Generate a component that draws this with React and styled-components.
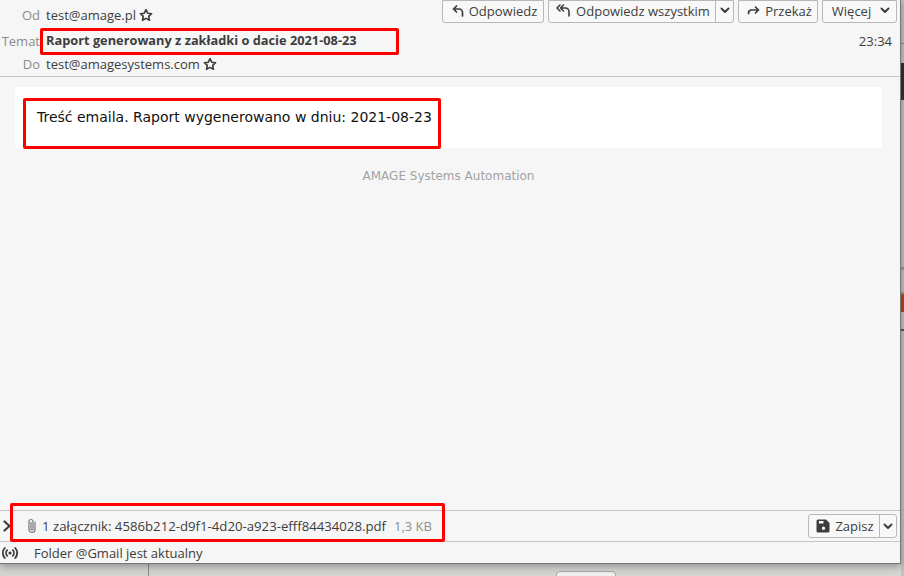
import React from "react";
import styled, { createGlobalStyle } from "styled-components";

const GlobalStyle = createGlobalStyle`
  html, body {
    margin: 0;
    padding: 0;
    height: 576px;
    overflow: hidden;
    background: #c4c4c2;
  }
`;

const Desktop = styled.div`
  position: relative;
  width: 904px;
  height: 576px;
  overflow: hidden;
  background: linear-gradient(#c0c0be, #d4d4d2);
`;

const Backdrop = styled.div`
  position: absolute;
  left: 148px;
  top: 564px;
  width: 1px;
  height: 12px;
  background: #8a8a88;
`;

const GhostButton = styled.div`
  position: absolute;
  left: 556px;
  top: 571px;
  width: 58px;
  height: 10px;
  border: 1px solid #a8a8a8;
  border-radius: 4px;
  background: #f0f0ee;
`;

const Strip = styled.div`
  position: absolute;
  left: 901px;
  top: 0;
  width: 3px;
  height: 576px;
  background: #c2c2c0;
`;

const StripMark = styled.div`
  position: absolute;
  left: 0;
  top: ${p => p.$top}px;
  width: 3px;
  height: ${p => p.$h}px;
  background: ${p => p.$color};
`;

const Window = styled.div`
  position: relative;
  width: 901px;
  height: 564px;
  display: flex;
  flex-direction: column;
  background: #f6f6f6;
  border-right: 1px solid #777;
  border-bottom: 1px solid #777;
  box-sizing: border-box;
  box-shadow: 0 2px 8px rgba(0, 0, 0, 0.35);
  font-family: "Open Sans", "Noto Sans", sans-serif;
  font-size: 13px;
  color: #3d3d3d;
`;

const Header = styled.header`
  height: 77px;
  box-sizing: border-box;
  border-bottom: 1px solid #c5c5c5;
  display: flex;
  flex-direction: column;
  flex-shrink: 0;
`;

const HeaderRow = styled.div`
  height: ${p => p.$h}px;
  display: flex;
  align-items: center;
`;

const Label = styled.span`
  width: 40px;
  margin-right: 6px;
  text-align: right;
  color: #8b8b8b;
  white-space: nowrap;
`;

const Address = styled.span`
  color: #3d3d3d;
  margin-right: 3px;
`;

const Subject = styled.span`
  font-weight: 700;
  font-size: 12.8px;
  color: #3d3d3d;
  margin-bottom: 2px;
`;

const Time = styled.span`
  margin-left: auto;
  margin-right: 8px;
`;

const Toolbar = styled.div`
  margin-left: auto;
  margin-right: 3px;
  display: flex;
  gap: 4px;
  align-self: flex-start;
`;

const ButtonGroup = styled.div`
  display: flex;
  height: ${p => p.$h || 23}px;
  box-sizing: border-box;
  border: 1px solid #b8b8b8;
  border-radius: ${p => (p.$all ? "3px" : "0 0 3px 3px")};
  background: #f8f8f8;
`;

const ToolButton = styled.div`
  display: flex;
  align-items: center;
  justify-content: center;
  gap: 5px;
  width: ${p => p.$w}px;
  box-sizing: border-box;
  white-space: nowrap;
  padding-bottom: ${p => p.$lift || 0}px;
  padding-left: ${p => p.$lead || 0}px;
  & + & {
    border-left: 1px solid #b8b8b8;
  }
`;

const MoreLabel = styled.span`
  margin-right: 4px;
`;

const Body = styled.main`
  flex: 1;
  padding: 10px 18px 0 15px;
`;

const MessageCard = styled.div`
  height: 61px;
  box-sizing: border-box;
  padding: 21px 22px 0;
  background: #fff;
  border-radius: 3px;
  font-family: "DejaVu Sans", sans-serif;
  font-size: 14px;
  line-height: 18px;
  color: #111;
`;

const Footer = styled.div`
  margin-top: 19px;
  text-align: center;
  color: #a2a2a2;
  font-family: "DejaVu Sans", sans-serif;
  font-size: 12px;
  line-height: 18px;
`;

const AttachmentBar = styled.div`
  height: 31px;
  box-sizing: border-box;
  flex-shrink: 0;
  border-top: 1px solid #c5c5c5;
  display: flex;
  align-items: center;
  padding: 0 3px 0 3px;
`;

const ClipSlot = styled.span`
  display: flex;
  margin-left: 16px;
`;

const AttachmentText = styled.span`
  margin-left: 5px;
  font-size: 13.2px;
`;

const AttachmentSize = styled.span`
  margin-left: 8px;
  color: #8f8f8f;
`;

const StatusBar = styled.div`
  height: 22px;
  box-sizing: border-box;
  flex-shrink: 0;
  border-top: 1px solid #c5c5c5;
  display: flex;
  align-items: center;
  padding-left: 2px;
  gap: 16px;
`;

const Spacer = styled.div`
  flex: 1;
`;

const Redline = styled.div`
  position: absolute;
  left: ${p => p.$x}px;
  top: ${p => p.$y}px;
  width: ${p => p.$w}px;
  height: ${p => p.$h}px;
  box-sizing: border-box;
  border: 3px solid #f00;
  border-radius: 2px;
  pointer-events: none;
`;

const Glyph = styled.svg`
  flex-shrink: 0;
  fill: none;
  stroke: ${p => p.$color || "#3d3d3d"};
  stroke-width: ${p => p.$sw || 1.6};
  stroke-linecap: round;
  stroke-linejoin: round;
`;

const Star = () => (
  <Glyph width="14" height="14" viewBox="0 0 14 14" $sw={1.6}>
    <path d="M7 1.6l1.7 3.6 3.9.5-2.9 2.7.8 3.9L7 10.4l-3.5 1.9.8-3.9L1.4 5.7l3.9-.5z" />
  </Glyph>
);

const Chevron = () => (
  <Glyph width="10" height="7" viewBox="0 0 10 7" $sw={2}>
    <path d="M1.5 1.5L5 5l3.5-3.5" />
  </Glyph>
);

const ReplyIcon = () => (
  <Glyph width="12" height="12" viewBox="0 0 12 12" $sw={1.7}>
    <path d="M4.5 1L1.5 4l3 3M1.5 4H7a3.5 3.5 0 0 1 3.5 3.5V11" />
  </Glyph>
);

const ReplyAllIcon = () => (
  <Glyph width="15" height="13" viewBox="0 0 15 13" $sw={1.6}>
    <path d="M4 1L1 4l3 3M7.5 1l-3 3 3 3M4.5 4H9.5A3.5 3.5 0 0 1 13 7.5V12" />
  </Glyph>
);

const ForwardIcon = () => (
  <Glyph width="13" height="9" viewBox="0 0 13 9" $sw={1.7}>
    <path d="M8.5 1l3 3-3 3M11.5 4H4.5Q1.5 4 1.5 7.5" />
  </Glyph>
);

const ClipIcon = () => (
  <Glyph width="10" height="16" viewBox="0 0 10 16" $color="#777" $sw={1.2}>
    <path d="M8 4v7.5a3 3 0 0 1-6 0V3.5a2 2 0 0 1 4 0v7.5a.9.9 0 0 1-2 0V4.5" />
  </Glyph>
);

const SaveIcon = () => (
  <svg width="14" height="14" viewBox="0 0 14 14">
    <path fill="#3d3d3d" fillRule="evenodd" d="M2 .5h8l3.5 3.5v8a1.5 1.5 0 0 1-1.5 1.5H2A1.5 1.5 0 0 1 .5 12V2A1.5 1.5 0 0 1 2 .5zM3 2v2.5h4.5V2zM7.5 7.5a1.7 1.7 0 1 0 0 3.4 1.7 1.7 0 0 0 0-3.4z" />
  </svg>
);

const TwistyIcon = () => (
  <Glyph width="8" height="12" viewBox="0 0 8 12" $sw={2.2}>
    <path d="M1.5 1.5L6.5 6l-5 4.5" />
  </Glyph>
);

const OnlineIcon = () => (
  <Glyph width="16" height="12" viewBox="0 0 16 12" $sw={1.8}>
    <circle cx="8" cy="6" r="1.6" fill="#3d3d3d" stroke="none" />
    <path d="M5.2 3.2a4 4 0 0 0 0 5.6M10.8 3.2a4 4 0 0 1 0 5.6M2.8 1a7.4 7.4 0 0 0 0 10M13.2 1a7.4 7.4 0 0 1 0 10" />
  </Glyph>
);

export default function App() {
  return (
    <Desktop>
      <GlobalStyle />
      <Backdrop />
      <GhostButton />
      <Strip>
        <StripMark $top={43} $h={1} $color="#8a8a8a" />
        <StripMark $top={63} $h={37} $color="#333" />
        <StripMark $top={267} $h={3} $color="#9a9a9a" />
        <StripMark $top={292} $h={2} $color="#9a9a9a" />
        <StripMark $top={294} $h={18} $color="#c1431c" />
        <StripMark $top={329} $h={2} $color="#555" />
      </Strip>
      <Window>
        <Header>
          <HeaderRow $h={30}>
            <Label>Od</Label>
            <Address>test@amage.pl</Address>
            <Star />
            <Toolbar>
              <ButtonGroup>
                <ToolButton $w={100} $lift={2} $lead={3}><ReplyIcon />Odpowiedz</ToolButton>
              </ButtonGroup>
              <ButtonGroup>
                <ToolButton $w={166} $lift={2} $lead={2}><ReplyAllIcon />Odpowiedz wszystkim</ToolButton>
                <ToolButton $w={18} $lift={2}><Chevron /></ToolButton>
              </ButtonGroup>
              <ButtonGroup>
                <ToolButton $w={78} $lift={2} $lead={3}><ForwardIcon />Przekaż</ToolButton>
              </ButtonGroup>
              <ButtonGroup>
                <ToolButton $w={73} $lift={2} $lead={3}><MoreLabel>Więcej</MoreLabel><Chevron /></ToolButton>
              </ButtonGroup>
            </Toolbar>
          </HeaderRow>
          <HeaderRow $h={22}>
            <Label>Temat</Label>
            <Subject>Raport generowany z zakładki o dacie 2021-08-23</Subject>
            <Time>23:34</Time>
          </HeaderRow>
          <HeaderRow $h={24}>
            <Label>Do</Label>
            <Address>test@amagesystems.com</Address>
            <Star />
          </HeaderRow>
        </Header>
        <Body>
          <MessageCard>Treść emaila. Raport wygenerowano w dniu: 2021-08-23</MessageCard>
          <Footer>AMAGE Systems Automation</Footer>
        </Body>
        <AttachmentBar>
          <TwistyIcon />
          <ClipSlot><ClipIcon /></ClipSlot>
          <AttachmentText>1 załącznik: 4586b212-d9f1-4d20-a923-efff84434028.pdf</AttachmentText>
          <AttachmentSize>1,3 KB</AttachmentSize>
          <Spacer />
          <ButtonGroup $all $h={24}>
            <ToolButton $w={70} $lead={2}><SaveIcon />Zapisz</ToolButton>
            <ToolButton $w={17}><Chevron /></ToolButton>
          </ButtonGroup>
        </AttachmentBar>
        <StatusBar>
          <OnlineIcon />
          Folder @Gmail jest aktualny
        </StatusBar>
        <Redline $x={40} $y={28} $w={359} $h={27} />
        <Redline $x={23} $y={98} $w={418} $h={51} />
        <Redline $x={10} $y={503} $w={435} $h={39} />
      </Window>
    </Desktop>
  );
}
